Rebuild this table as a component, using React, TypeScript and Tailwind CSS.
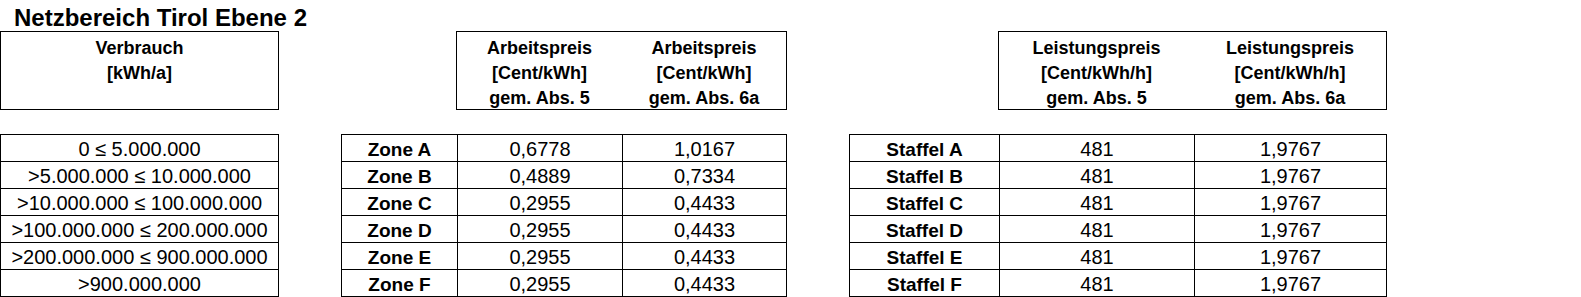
import React from "react";

interface HeaderCol {
  lines: string[];
  width: string;
}

const ranges = [
  "0 ≤ 5.000.000",
  ">5.000.000 ≤ 10.000.000",
  ">10.000.000 ≤ 100.000.000",
  ">100.000.000 ≤ 200.000.000",
  ">200.000.000 ≤ 900.000.000",
  ">900.000.000",
];

const zones = [
  { name: "Zone A", abs5: "0,6778", abs6a: "1,0167" },
  { name: "Zone B", abs5: "0,4889", abs6a: "0,7334" },
  { name: "Zone C", abs5: "0,2955", abs6a: "0,4433" },
  { name: "Zone D", abs5: "0,2955", abs6a: "0,4433" },
  { name: "Zone E", abs5: "0,2955", abs6a: "0,4433" },
  { name: "Zone F", abs5: "0,2955", abs6a: "0,4433" },
];

const staffeln = ["A", "B", "C", "D", "E", "F"].map((s) => ({
  name: `Staffel ${s}`,
  abs5: "481",
  abs6a: "1,9767",
}));

// header box with one or more centred text columns
const HeaderBox: React.FC<{ cols: HeaderCol[]; className?: string }> = ({
  cols,
  className = "",
}) => (
  <div
    className={`flex h-[79px] overflow-hidden border border-black ${className}`}
  >
    {cols.map((col, i) => (
      <div
        key={i}
        className={`${col.width} flex flex-col items-center pt-[4px] text-[18px] font-bold leading-[25px]`}
      >
        {col.lines.map((line, j) => (
          <span key={j} className="whitespace-nowrap">
            {line}
          </span>
        ))}
      </div>
    ))}
  </div>
);

const cellText =
  "h-[26px] overflow-hidden pt-[3px] leading-[23px] text-center whitespace-nowrap";
const labelText = `${cellText} text-[19px] font-bold`;
const valueText = `${cellText} text-[20px] border-l border-black`;

const rowClass = (i: number) =>
  `flex h-[26px] box-content ${i > 0 ? "border-t border-black" : ""}`;

const App: React.FC = () => {
  return (
    <div className="h-[297px] w-full overflow-hidden bg-white font-['Liberation_Sans',Arial,sans-serif] text-black">
      <h1 className="h-[31px] pl-[14px] pt-[6px] text-[24px] font-bold leading-[23px]">
        Netzbereich Tirol Ebene 2
      </h1>

      <div className="flex gap-[62px]">
        {/* Verbrauch */}
        <div className="flex w-[279px] flex-col">
          <HeaderBox
            cols={[{ lines: ["Verbrauch", "[kWh/a]"], width: "flex-1" }]}
          />
          <div className="mt-[24px] border border-black">
            {ranges.map((r, i) => (
              <div key={r} className={rowClass(i)}>
                <div className={`flex-1 text-[20px] ${cellText}`}>{r}</div>
              </div>
            ))}
          </div>
        </div>

        {/* Arbeitspreis */}
        <div className="flex w-[446px] flex-col">
          <HeaderBox
            className="ml-[115px]"
            cols={[
              {
                lines: ["Arbeitspreis", "[Cent/kWh]", "gem. Abs. 5"],
                width: "w-[165px]",
              },
              {
                lines: ["Arbeitspreis", "[Cent/kWh]", "gem. Abs. 6a"],
                width: "flex-1",
              },
            ]}
          />
          <div className="mt-[24px] border border-black">
            {zones.map((z, i) => (
              <div key={z.name} className={rowClass(i)}>
                <div className={`w-[115px] ${labelText}`}>{z.name}</div>
                <div className={`w-[165px] ${valueText}`}>{z.abs5}</div>
                <div className={`flex-1 ${valueText}`}>{z.abs6a}</div>
              </div>
            ))}
          </div>
        </div>

        {/* Leistungspreis */}
        <div className="flex w-[538px] flex-col">
          <HeaderBox
            className="ml-[149px]"
            cols={[
              {
                lines: ["Leistungspreis", "[Cent/kWh/h]", "gem. Abs. 5"],
                width: "w-[195px]",
              },
              {
                lines: ["Leistungspreis", "[Cent/kWh/h]", "gem. Abs. 6a"],
                width: "flex-1",
              },
            ]}
          />
          <div className="mt-[24px] border border-black">
            {staffeln.map((s, i) => (
              <div key={s.name} className={rowClass(i)}>
                <div className={`w-[149px] ${labelText}`}>{s.name}</div>
                <div className={`w-[195px] ${valueText}`}>{s.abs5}</div>
                <div className={`flex-1 ${valueText}`}>{s.abs6a}</div>
              </div>
            ))}
          </div>
        </div>
      </div>
    </div>
  );
};

export default App;
